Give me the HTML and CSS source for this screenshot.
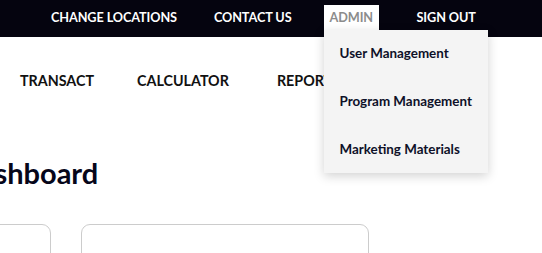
FILE: index.html
```html
<!DOCTYPE html>
<html>
<head>
<meta charset="utf-8">
<link rel="stylesheet" href="styles.css">
</head>
<body>
<header class="topbar">
  <nav class="top-links">
    <a class="top-link tl-change">CHANGE LOCATIONS</a>
    <a class="top-link tl-contact">CONTACT US</a>
    <div class="admin-wrap">
      <a class="top-link tl-admin">ADMIN</a>
      <div class="dropdown">
        <a class="dd-item">User Management</a>
        <a class="dd-item">Program Management</a>
        <a class="dd-item">Marketing Materials</a>
      </div>
    </div>
    <a class="top-link tl-signout">SIGN OUT</a>
  </nav>
</header>
<nav class="mainnav">
  <a class="mn-item mn-transact">TRANSACT</a>
  <a class="mn-item mn-calc">CALCULATOR</a>
  <a class="mn-item mn-reports">REPORTS</a>
</nav>
<main class="content">
  <h1 class="title">Dashboard</h1>
  <div class="cards">
    <div class="card"></div>
    <div class="card"></div>
  </div>
</main>
</body>
</html>
```

FILE: styles.css
```css
html, body {
  margin: 0;
  padding: 0;
  background: #ffffff;
  overflow: hidden;
}
body {
  font-family: Lato, "Open Sans", sans-serif;
  color: #111;
}
a { text-decoration: none; color: inherit; cursor: pointer; }

.topbar {
  height: 37px;
  background: #05040f;
}
.top-links {
  display: flex;
  align-items: flex-start;
  height: 37px;
  padding-left: 51px;
}
.top-link {
  font-size: 12.7px;
  font-weight: 700;
  color: #fff;
  line-height: 25px;
  margin-top: 5px;
  display: block;
  letter-spacing: -0.1px;
}
.tl-change { margin-right: 37px; }
.tl-contact { margin-right: 32px; }
.admin-wrap { position: relative; }
.tl-admin {
  background: #fff;
  color: #8c8c8c;
  padding: 0 6px;
  width: 55px;
  box-sizing: border-box;
  height: 25px;
  margin-right: 38px;
}
.dropdown {
  position: absolute;
  top: 30px;
  left: 0;
  width: 164px;
  height: 143px;
  background: #f4f4f4;
  box-shadow: 0 3px 10px rgba(0,0,0,0.18);
  display: flex;
  flex-direction: column;
  padding-top: 13px;
  box-sizing: border-box;
  z-index: 5;
}
.dd-item {
  font-size: 13.4px;
  font-weight: 700;
  color: #0e1028;
  padding-left: 16px;
  line-height: 20px;
  margin-bottom: 28px;
}

.mainnav {
  display: flex;
  padding-left: 20px;
  margin-top: 32px;
  height: 22px;
  align-items: center;
}
.mn-item {
  font-size: 14.3px;
  font-weight: 700;
  color: #111;
}
.mn-transact { margin-right: 43px; }
.mn-calc { margin-right: 48px; }

.content {
  margin-left: -42px;
}
.title {
  font-size: 29px;
  font-weight: 700;
  margin: 65px 0 0 0;
  line-height: 34px;
  color: #06061a;
}
.cards {
  display: flex;
  gap: 30px;
  margin-top: 34px;
  margin-left: -195px;
}
.card {
  width: 288px;
  height: 120px;
  border: 1px solid #cccccc;
  border-radius: 9px;
  box-sizing: border-box;
  flex: none;
}
```
